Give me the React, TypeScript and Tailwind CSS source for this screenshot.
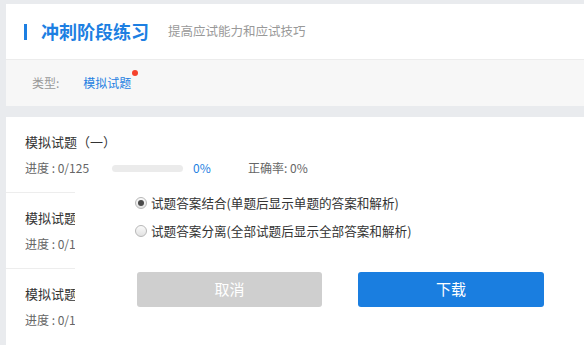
const font = { fontFamily: '"Noto Sans CJK SC", "Noto Sans", sans-serif' }

interface ItemProps {
  title: string
  last?: boolean
}

function PracticeItem({ title, last }: ItemProps) {
  return (
    <div className={last ? 'h-[76px] pl-[19px] pt-[15px]' : 'h-[76px] pl-[19px] pt-[15px] border-b border-[#ededed]'}>
      <p className="text-[13px] leading-[20px] text-[#333]">{title}</p>
      <div className="flex items-center mt-[7px] text-[12px] leading-[18px]">
        <span className="w-[87px] text-[#666]">进度 : 0/125</span>
        <div className="w-[71px] h-[7px] rounded-full bg-[#ebebeb]" />
        <span className="w-[55px] ml-[10px] text-[#1d7fe2]">0%</span>
        <span className="text-[#666]">正确率: 0%</span>
      </div>
    </div>
  )
}

function Radio({ checked, label }: { checked?: boolean; label: string }) {
  return (
    <label className="flex items-center h-[20px]">
      <span className="w-[12px] h-[12px] rounded-full border border-[#b8b8b8] bg-gradient-to-b from-[#fafafa] to-[#e2e2e2] flex items-center justify-center">
        {checked && <span className="w-[6px] h-[6px] rounded-full bg-[#4a4a4a]" />}
      </span>
      <span className="ml-[4px] text-[12.6px] text-[#333]">{label}</span>
    </label>
  )
}

export default function App() {
  return (
    <div className="relative w-[584px] h-[345px] overflow-hidden bg-[#e9ebee]" style={font}>
      {/* header */}
      <div className="ml-[6px] mt-[4px] h-[55px] bg-white flex items-center pl-[18px]">
        <div className="w-[3px] h-[16px] bg-[#1d7fe2]" />
        <h1 className="ml-[14px] text-[18px] font-bold text-[#1d7fe2]">冲刺阶段练习</h1>
        <span className="ml-[19px] text-[12.5px] text-[#999]">提高应试能力和应试技巧</span>
      </div>

      {/* filter row */}
      <div className="ml-[6px] h-[47px] bg-[#f7f7f7] border-t border-[#ececec] flex items-center pl-[26px] text-[12px]">
        <span className="text-[#999]">类型:</span>
        <span className="relative ml-[24px] text-[#1d7fe2]">
          模拟试题
          <span className="absolute -right-[7px] -top-[4px] w-[6px] h-[6px] rounded-full bg-[#f5422d]" />
        </span>
      </div>

      {/* list */}
      <div className="ml-[6px] mt-[11px] bg-white">
        <PracticeItem title="模拟试题（一）" />
        <PracticeItem title="模拟试题（二）" />
        <PracticeItem title="模拟试题（三）" last />
      </div>

      {/* download dialog */}
      <div className="absolute left-[75px] top-[181px] right-0 bottom-0 bg-white">
        <div className="pl-[60px] pt-[12px] flex flex-col gap-[8px]">
          <Radio checked label="试题答案结合(单题后显示单题的答案和解析)" />
          <Radio label="试题答案分离(全部试题后显示全部答案和解析)" />
        </div>
        <div className="flex mt-[31px] pl-[62px] gap-[36px]">
          <button className="w-[185px] h-[35px] rounded-[3px] bg-[#cfcfcf] text-white text-[15px]">取消</button>
          <button className="w-[186px] h-[35px] rounded-[3px] bg-[#1a7ee0] text-white text-[15px]">下载</button>
        </div>
      </div>
    </div>
  )
}
